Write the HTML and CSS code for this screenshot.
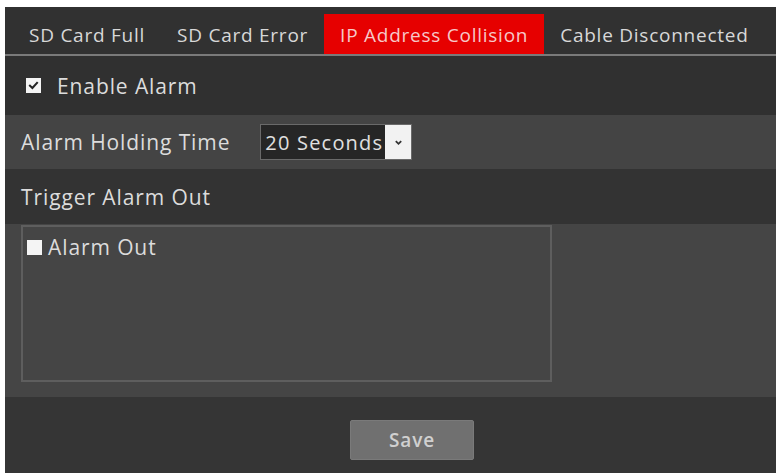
FILE: index.html
```html
<!DOCTYPE html>
<html>
<head>
<meta charset="utf-8">
<link rel="stylesheet" href="styles.css">
</head>
<body>
<div class="panel">
  <div class="tabs">
    <div class="tab">SD Card Full</div>
    <div class="tab">SD Card Error</div>
    <div class="tab active">IP Address Collision</div>
    <div class="tab">Cable Disconnected</div>
  </div>
  <div class="row enable-row">
    <span class="check checked">
      <svg viewBox="0 0 14 14" width="11" height="11"><path d="M2.5 7.2 L5.6 10.2 L11.5 3.6" fill="none" stroke="#222" stroke-width="2.6" stroke-linecap="square"/></svg>
    </span>
    <span class="label enable-label">Enable Alarm</span>
  </div>
  <div class="row hold-row">
    <span class="label">Alarm Holding Time</span>
    <div class="select">
      <span class="select-value">20 Seconds</span>
      <span class="select-btn">
        <svg viewBox="0 0 10 10" width="9" height="9"><path d="M2 3.5 L5 6.5 L8 3.5" fill="none" stroke="#333" stroke-width="2"/></svg>
      </span>
    </div>
  </div>
  <div class="row trigger-row">
    <span class="label">Trigger Alarm Out</span>
  </div>
  <div class="out-area">
    <div class="out-box">
      <div class="out-item">
        <span class="check plain"></span>
        <span class="label">Alarm Out</span>
      </div>
    </div>
  </div>
  <div class="footer">
    <button class="save">Save</button>
  </div>
</div>
</body>
</html>
```

FILE: styles.css
```css
html, body {
  margin: 0;
  padding: 0;
  background: #ffffff;
}

body {
  font-family: "Open Sans", "Noto Sans", "Liberation Sans", sans-serif;
  color: #dcdcdc;
}

.panel {
  margin: 7px 0 0 5px;
  width: 771px;
  height: 466px;
  background: #333333;
  display: flex;
  flex-direction: column;
}

.tabs {
  height: 49px;
  box-sizing: border-box;
  padding: 7px 0 0 8px;
  display: flex;
  border-bottom: 2px solid #7a7a7a;
  background: #313131;
}

.tab {
  height: 40px;
  padding: 2px 16px 0 16px;
  box-sizing: border-box;
  display: flex;
  align-items: center;
  font-size: 19px;
  letter-spacing: 0.75px;
  color: #d8d8d8;
  white-space: nowrap;
}

.tab.active {
  background: #e60000;
  color: #f6c8c8;
}

.row {
  display: flex;
  align-items: center;
  padding-left: 16px;
}

.label {
  font-size: 21px;
  letter-spacing: 0.9px;
  white-space: nowrap;
}

.enable-row {
  height: 59px;
  background: #303030;
  padding-left: 21px;
}

.enable-label {
  margin-left: 16px;
}

.check {
  width: 15px;
  height: 15px;
  background: #f4f4f4;
  display: inline-flex;
  align-items: center;
  justify-content: center;
  box-sizing: border-box;
  flex: none;
}

.hold-row {
  height: 54px;
  background: #444444;
}

.select {
  margin-left: 30px;
  display: flex;
  height: 36px;
  box-sizing: border-box;
  border: 1px solid #6a6a6a;
  background: #262626;
}

.select-value {
  font-size: 20px;
  letter-spacing: 1.2px;
  padding: 0 2px 0 4px;
  display: flex;
  align-items: center;
  color: #e0e0e0;
  white-space: nowrap;
}

.select-btn {
  width: 26px;
  background: #f2f2f2;
  display: flex;
  align-items: center;
  justify-content: center;
}

.trigger-row {
  height: 55px;
  background: #333333;
}

.out-area {
  height: 173px;
  background: #454545;
  padding: 1px 0 0 16px;
  box-sizing: border-box;
}

.out-box {
  width: 531px;
  height: 157px;
  box-sizing: border-box;
  border: 2px solid #5e5e5e;
  padding: 6px 0 0 4px;
}

.out-item {
  display: flex;
  align-items: center;
}

.out-item .label {
  margin-left: 6px;
}

.footer {
  flex: 1;
  background: #353535;
  padding: 23px 0 0 345px;
  box-sizing: border-box;
}

.save {
  width: 124px;
  height: 40px;
  background: #707070;
  border: 1px solid #7a7a7a;
  border-radius: 2px;
  color: #d0d0d0;
  font-family: "Open Sans", "Noto Sans", "Liberation Sans", sans-serif;
  font-size: 19px;
  font-weight: 600;
  letter-spacing: 0.8px;
  padding: 0;
}
```
